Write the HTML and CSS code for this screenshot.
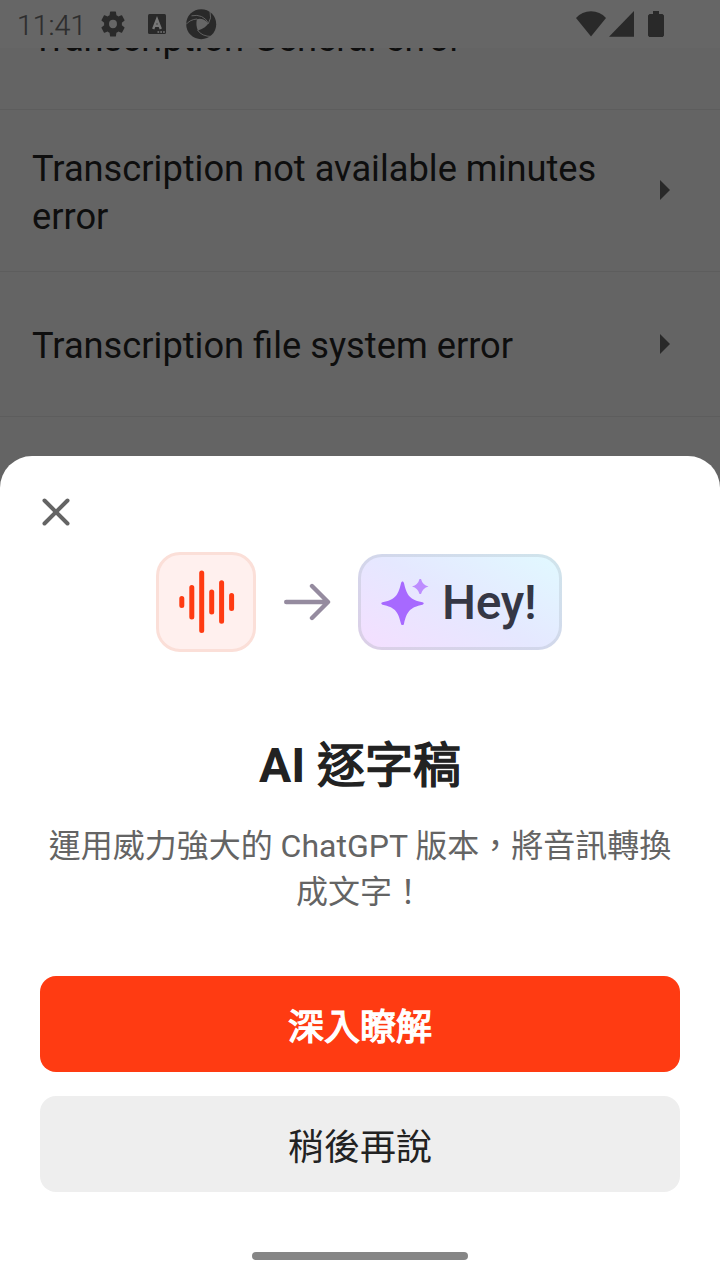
FILE: index.html
```html
<!DOCTYPE html>
<html lang="zh-Hant">
<head>
<meta charset="utf-8">
<title>AI 逐字稿</title>
<link rel="stylesheet" href="styles.css">
</head>
<body>
<div class="screen">
  <header class="status">
    <span class="clock">11:41</span>
    <svg class="gear" width="24" height="26" viewBox="2.3 2 19.4 20" preserveAspectRatio="none"><path d="M19.14 12.94c.04-.3.06-.61.06-.94 0-.32-.02-.64-.07-.94l2.03-1.58a.49.49 0 0 0 .12-.61l-1.92-3.32a.488.488 0 0 0-.59-.22l-2.39.96c-.5-.38-1.03-.7-1.62-.94l-.36-2.54a.484.484 0 0 0-.48-.41h-3.84c-.24 0-.43.17-.47.41l-.36 2.54c-.59.24-1.13.57-1.62.94l-2.39-.96c-.22-.08-.47 0-.59.22L2.74 8.87c-.12.21-.08.47.12.61l2.03 1.58c-.05.3-.09.63-.09.94s.02.64.07.94l-2.03 1.58a.49.49 0 0 0-.12.61l1.92 3.32c.12.22.37.29.59.22l2.39-.96c.5.38 1.03.7 1.62.94l.36 2.54c.05.24.24.41.48.41h3.84c.24 0 .44-.17.47-.41l.36-2.54c.59-.24 1.13-.56 1.62-.94l2.39.96c.22.08.47 0 .59-.22l1.92-3.32c.12-.22.07-.47-.12-.61l-2.01-1.58zM12 15.2A3.2 3.2 0 1 1 12 8.8a3.2 3.2 0 0 1 0 6.4z"/></svg>
    <svg class="keyboard" width="18" height="20" viewBox="0 0 18 20"><rect width="18" height="20" rx="1.5"/><path class="letter" d="M5.2 15 9 5.2 12.8 15M6.7 11.7h4.6"/><path class="dots" d="M9.5 18h1.7m1.1 0h1.7m1.1 0h1.7"/></svg>
    <svg class="aperture" width="31" height="31" viewBox="0 0 31 31"><circle cx="15.2" cy="15.2" r="15"/><path class="hole" d="M10.900 10.200Q17 8.500 22.300 14.200Q20.500 18.500 11.900 21.500Q9.500 16 10.900 10.200z"/><path class="blade" d="M5.500 6.800Q17 4.500 22.500 14.200M24 2.500Q26 9 22.300 14.800M0 15.500Q4 10.500 11 10M11.500 21Q15.500 27.500 26 27.500"/></svg>
    <span class="spacer"></span>
    <svg width="31" height="26" viewBox="0 0 31 26"><path d="M0 7Q6 .3 15 .3T30 7L15 25.500z"/></svg>
    <svg class="signal" width="26" height="26" viewBox="0 0 26 26"><path d="M25 0v25.700H0z"/></svg>
    <svg class="battery" width="16" height="26" viewBox="0 0 16 26"><path d="M5 0h6v3h3.500L16 4.500v20L14.800 26H1.200L0 24.500v-20L1.500 3H5z"/></svg>
  </header>
  <main class="list">
    <div class="row row-cut"><span class="label">Transcription General error</span></div>
    <div class="row row-tall"><span class="label">Transcription not available minutes error</span><i class="caret"></i></div>
    <div class="row"><span class="label">Transcription file system error</span><i class="caret"></i></div>
  </main>
  <section class="sheet">
    <svg class="close" width="28" height="28" viewBox="0 0 28 28"><path d="M2.500 2.500 25.500 25.500M25.500 2.500 2.500 25.500"/></svg>
    <div class="hero">
      <div class="audio"><svg width="56" height="64" viewBox="0 0 56 64"><path d="M2.800 28.500v7M12.800 17.500v29.500M22.700 3v57.500M32.700 22v20M42.600 12.800v38.400M52.600 25.500v13"/></svg></div>
      <svg class="arrow" width="48" height="38" viewBox="0 0 48 38"><path d="M2.200 19H43.500M28 3 44 19 28 35"/></svg>
      <div class="hey">
        <svg width="48" height="46" viewBox="0 0 48 46"><path class="star" d="M20 4.200C20.500 2 22.500 2 23 4.200C26 17 29 20.500 41.500 23.300Q44 24.500 41.500 25.700C29 28.500 26 32 23 44.700C22.500 46.900 20.500 46.900 20 44.700C17 32 14 28.500 1.500 25.700Q-1 24.500 1.500 23.300C14 20.500 17 17 20 4.200z"/><path class="star-small" d="M38.500 0H40Q41.500 6 47.500 7.500Q41.500 9 40 15H38.500Q37 9 31 7.500Q37 6 38.500 0z"/></svg>
        <span>Hey!</span>
      </div>
    </div>
    <h1>AI <span class="cjk">逐字稿</span></h1>
    <p>運用威力強大的 ChatGPT 版本，將音訊轉換成文字！</p>
    <button class="primary">深入瞭解</button>
    <button class="secondary">稍後再說</button>
    <div class="handle"></div>
  </section>
</div>
</body>
</html>
```
FILE: styles.css
```css
* { box-sizing: border-box; }
body { margin: 0; font-family: Roboto, "Noto Sans CJK TC", sans-serif; }
svg { display: block; flex: none; }
.screen { position: relative; width: 720px; height: 1280px; overflow: hidden; background: #646464; }
.status { display: flex; align-items: center; height: 48px; padding: 0 56px 0 16px; background: #666; fill: #292929; }
.clock { width: 85px; color: #2d2d2d; font-size: 28.5px; line-height: 44px; font-weight: 300; padding: 3px 0 0 1px; -webkit-text-stroke: 0.2px #2d2d2d; }
.keyboard { margin-left: 23px; }
.letter { fill: none; stroke: #777; stroke-width: 2.4; }
.dots { fill: none; stroke: #777; stroke-width: 1.5; }
.aperture { margin-left: 20px; }
.hole { fill: #666; }
.blade { fill: none; stroke: #666; stroke-width: 0.9; }
.spacer { flex: 1; }
.signal { margin-left: 2px; }
.battery { margin-left: 13px; }
.list { height: 408px; overflow: hidden; }
.row { display: flex; align-items: center; height: 145px; padding: 0 50px 0 32px; border-bottom: 1px solid #5d5d5d; }
.row-cut { height: 62px; overflow: hidden; align-items: flex-start; }
.row-cut .label { margin-top: -33px; padding: 0; }
.row-tall { height: 162px; }
.row-tall .caret { margin-bottom: 1px; }
.label { width: 600px; padding-top: 4px; color: #0e0e0e; font-size: 36.25px; line-height: 48px; }
.caret { margin-left: auto; border: solid transparent; border-width: 10px 0 10px 10px; border-left-color: #292929; }
.sheet { position: absolute; left: 0; right: 0; bottom: 0; height: 824px; padding: 42px 40px 20px; display: flex; flex-direction: column; background: #fff; border-radius: 32px 32px 0 0; }
.close { margin-left: 2px; fill: none; stroke: #646464; stroke-width: 4; stroke-linecap: round; }
.hero { display: flex; align-items: center; height: 100px; margin-top: 26px; padding-left: 116px; }
.audio { display: grid; place-items: center; width: 100px; height: 100px; padding-left: 2px; border: 3px solid #fbdfd8; border-radius: 24px; background: #fff0ee; }
.audio svg { fill: none; stroke: #ff3b12; stroke-width: 5; stroke-linecap: round; }
.arrow { margin-left: 28px; fill: none; stroke: #958b9f; stroke-width: 4.4; stroke-linecap: round; stroke-linejoin: round; }
.hey { display: flex; align-items: center; width: 204px; height: 96px; margin-left: 26px; padding-left: 20px; border: 3px solid transparent; border-radius: 24px; background: linear-gradient(30deg, #f4dfff, #e5e8ff 50%, #e1f9ff) padding-box, linear-gradient(30deg, #dccfe7, #d2d7eb 50%, #d0e5ec) border-box; color: #353745; font-size: 48px; font-weight: 500; letter-spacing: -0.3px; }
.hey span { margin-left: 13px; }
.star { fill: #a769ff; }
.star-small { fill: #bd8dff; }
h1 { margin: 79px 0 0; color: #222; font-size: 48px; line-height: 70px; font-weight: 700; text-align: center; }
.cjk { font-weight: 400; -webkit-text-stroke: 1.5px #222; }
p { margin: 22px 0 0; color: #646464; font-size: 32px; line-height: 46px; text-align: center; }
button { height: 96px; flex: none; border: 0; padding: 0; border-radius: 16px; font: 400 36px Roboto, "Noto Sans CJK TC", sans-serif; }
.primary { margin-top: 61px; background: #ff3b12; color: #fff; -webkit-text-stroke: 1.3px #fff; }
.secondary { margin-top: 24px; background: #eee; color: #222; }
.handle { width: 216px; height: 8px; margin: auto auto 0; border-radius: 4px; background: #868686; }
```
